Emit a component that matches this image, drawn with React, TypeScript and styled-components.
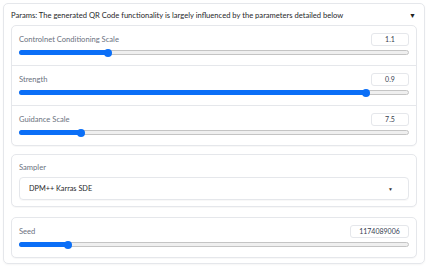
import React from "react";
import styled, { createGlobalStyle } from "styled-components";

const GlobalStyle = createGlobalStyle`
  body {
    margin: 0;
    background: #fff;
    font-family: Lato, "Liberation Sans", sans-serif;
  }
`;

const Page = styled.div`
  width: 429px;
  height: 266px;
  padding: 3px 4px 0 3px;
  box-sizing: border-box;
`;

const Card = styled.div`
  border: 1px solid #e5e7eb;
  border-radius: 5px;
  padding: 0 7px 5px;
  box-shadow: 0 1px 2px rgba(0, 0, 0, 0.04);
`;

const Header = styled.div`
  height: 21px;
  display: flex;
  align-items: center;
  justify-content: space-between;
  font-size: 7.6px;
  color: #27272a;
  padding-right: 1px;
`;

const Caret = styled.span`
  font-size: 7px;
  color: #222;
`;

const Group = styled.div<{ $gap?: number }>`
  border: 1px solid #e5e7eb;
  border-radius: 5px;
  margin-top: ${(p) => p.$gap ?? 0}px;
  background: #fff;
  box-shadow: 0 1px 1px rgba(0, 0, 0, 0.03);
`;

const Row = styled.div`
  padding: 6px 7px 6px;
  & + & {
    border-top: 1px solid #e5e7eb;
  }
`;

const RowHead = styled.div`
  display: flex;
  align-items: center;
  justify-content: space-between;
  height: 14px;
`;

const Label = styled.span`
  font-size: 7.6px;
  color: #6b7280;
`;

const NumBox = styled.div<{ $w: number }>`
  width: ${(p) => p.$w}px;
  height: 13px;
  box-sizing: border-box;
  border: 1px solid #e5e7eb;
  border-radius: 3px;
  font-size: 7px;
  color: #374151;
  display: flex;
  align-items: center;
  justify-content: center;
`;

const SliderWrap = styled.div`
  position: relative;
  height: 13px;
  display: flex;
  align-items: center;
`;

const Track = styled.div`
  position: relative;
  flex: 1;
  height: 3px;
  border: 1px solid #c4c4c4;
  background: #efefef;
  border-radius: 3px;
`;

const Fill = styled.div`
  position: absolute;
  left: -1px;
  top: -1px;
  bottom: -1px;
  background: #0b6ff7;
  border-radius: 3px;
`;

const Thumb = styled.div`
  position: absolute;
  top: 50%;
  width: 8px;
  height: 8px;
  margin: -4px 0 0 -4px;
  border-radius: 50%;
  background: #0b6ff7;
`;

const SamplerLabel = styled(Label)`
  display: block;
  margin: 1px 0 5px;
`;

const Select = styled.div`
  height: 23px;
  box-sizing: border-box;
  border: 1px solid #e5e7eb;
  border-radius: 4px;
  display: flex;
  align-items: center;
  justify-content: space-between;
  padding: 0 15px 0 9px;
  font-size: 7.3px;
  color: #27272a;
  box-shadow: 0 1px 1px rgba(0, 0, 0, 0.03);
`;

const SelectCaret = styled.span`
  font-size: 5px;
  color: #333;
`;

const Slider = ({ pct }: { pct: number }) => (
  <SliderWrap>
    <Track>
      <Fill style={{ width: `${pct}%` }} />
      <Thumb style={{ left: `${pct}%` }} />
    </Track>
  </SliderWrap>
);

const sliders = [
  { label: "Controlnet Conditioning Scale", value: "1.1", pct: 22.6 },
  { label: "Strength", value: "0.9", pct: 89.3 },
  { label: "Guidance Scale", value: "7.5", pct: 15.7 },
];

const App = () => (
  <Page>
    <GlobalStyle />
    <Card>
      <Header>
        <span>
          Params: The generated QR Code functionality is largely influenced by
          the parameters detailed below
        </span>
        <Caret>▼</Caret>
      </Header>
      <Group>
        {sliders.map((s) => (
          <Row key={s.label}>
            <RowHead>
              <Label>{s.label}</Label>
              <NumBox $w={38}>{s.value}</NumBox>
            </RowHead>
            <Slider pct={s.pct} />
          </Row>
        ))}
      </Group>
      <Group $gap={8}>
        <Row>
          <SamplerLabel>Sampler</SamplerLabel>
          <Select>
            <span>DPM++ Karras SDE</span>
            <SelectCaret>▼</SelectCaret>
          </Select>
        </Row>
      </Group>
      <Group $gap={10}>
        <Row>
          <RowHead>
            <Label>Seed</Label>
            <NumBox $w={59}>1174089006</NumBox>
          </RowHead>
          <Slider pct={12.3} />
        </Row>
      </Group>
    </Card>
  </Page>
);

export default App;
